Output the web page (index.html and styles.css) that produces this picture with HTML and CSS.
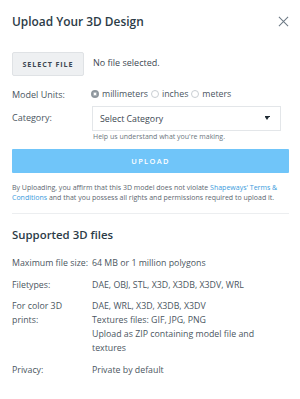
FILE: index.html
```html
<!DOCTYPE html>
<html>
<head>
<meta charset="utf-8">
<link rel="stylesheet" href="styles.css">
</head>
<body>
<div class="modal">
  <div class="header">
    <h1 class="title">Upload Your 3D Design</h1>
    <svg class="close" width="12" height="12" viewBox="0 0 12 12"><path d="M1 1L11 11M11 1L1 11" stroke="#6b7884" stroke-width="1.1" fill="none"/></svg>
  </div>
  <div class="file-row">
    <div class="btn-file">SELECT FILE</div>
    <span class="no-file">No file selected.</span>
  </div>
  <div class="units-row">
    <span class="label">Model Units:</span>
    <div class="radios">
      <span class="radio checked"></span><span class="opt">millimeters</span>
      <span class="radio"></span><span class="opt">inches</span>
      <span class="radio"></span><span class="opt">meters</span>
    </div>
  </div>
  <div class="cat-row">
    <span class="label cat-label">Category:</span>
    <div class="cat-field">
      <div class="select"><span>Select Category</span><span class="arrow"></span></div>
      <div class="help">Help us understand what you're making.</div>
    </div>
  </div>
  <div class="btn-upload">UPLOAD</div>
  <p class="disclaimer">By Uploading, you affirm that this 3D model does not violate <span class="link">Shapeways' Terms &amp;</span> <span class="link">Conditions</span> and that you possess all rights and permissions required to upload it.</p>
  <div class="divider"></div>
  <h2 class="sub">Supported 3D files</h2>
  <div class="specs">
    <div class="spec"><span class="k">Maximum file size:</span><span class="v">64 MB or 1 million polygons</span></div>
    <div class="spec"><span class="k">Filetypes:</span><span class="v">DAE, OBJ, STL, X3D, X3DB, X3DV, WRL</span></div>
    <div class="spec"><span class="k">For color 3D<br>prints:</span><span class="v">DAE, WRL, X3D, X3DB, X3DV<br>Textures files: GIF, JPG, PNG<br>Upload as ZIP containing model file and textures</span></div>
    <div class="spec"><span class="k">Privacy:</span><span class="v">Private by default</span></div>
  </div>
</div>
</body>
</html>
```
FILE: styles.css
```css
* { box-sizing: border-box; }
html, body { margin: 0; padding: 0; background: #fff; }
body { font-family: "Open Sans", "Noto Sans", sans-serif; color: #4b5661; }
.modal { width: 300px; padding: 11px 11px 0 12px; }
.header { display: flex; justify-content: space-between; align-items: center; height: 20px; }
.title { margin: 0; font-size: 11.9px; font-weight: 600; color: #2c3b47; line-height: 20px; }
.close { margin-right: 0; width: 11px; height: 11px; }
.file-row { display: flex; align-items: center; margin-top: 21px; }
.btn-file { width: 72px; height: 24px; background: #eef0f2; border: 1px solid #dfe2e5; border-radius: 2px; font-size: 7.2px; font-weight: 700; letter-spacing: 0.9px; color: #3d4852; display: flex; align-items: center; justify-content: center; }
.no-file { margin-left: 9px; font-size: 9px; color: #3d4852; margin-top: -3px; }
.units-row { display: flex; align-items: center; margin-top: 11px; height: 14px; }
.label { width: 79px; flex: none; font-size: 9px; color: #4b5661; }
.radios { display: flex; align-items: center; font-size: 8.8px; color: #4b5661; }
.radio { width: 8px; height: 8px; border-radius: 50%; border: 1px solid #c9ced3; background: #fff; margin-right: 3px; flex: none; }
.radio.checked { border: 2.4px solid #8e969d; background: #fff; box-shadow: inset 0 0 0 0.6px #8e969d; }
.opt { margin-right: 3px; }
.cat-row { display: flex; align-items: flex-start; margin-top: 5px; }
.cat-label { padding-top: 5px; }
.cat-field { width: 189px; margin-left: 1px; }
.select { height: 25px; border: 1px solid #e3e6e9; display: flex; align-items: center; justify-content: space-between; padding: 0 11px 0 7px; font-size: 8.8px; color: #3d4852; }
.arrow { width: 0; height: 0; border-left: 2.5px solid transparent; border-right: 2.5px solid transparent; border-top: 3.5px solid #1f2a33; position: relative; }
.arrow::before { content: ""; position: absolute; left: -2.5px; top: -4.5px; width: 5px; height: 1px; background: #1f2a33; }
.help { font-size: 7px; color: #6d7780; margin-top: 1px; padding-left: 1px; line-height: 9px; }
.btn-upload { margin-top: 8px; height: 24px; background: #70c5f9; color: #fff; font-size: 7.5px; font-weight: 600; letter-spacing: 1.3px; display: flex; align-items: center; justify-content: center; border-radius: 1px; }
.disclaimer { margin: 10px 0 0; font-size: 7px; line-height: 10px; color: #5d6770; }
.link { color: #3a9bdc; }
.divider { height: 1px; background: #eceef0; margin-top: 10px; }
.sub { margin: 13px 0 0; font-size: 11.4px; font-weight: 600; color: #2c3b47; line-height: 16px; }
.specs { margin-top: 13px; }
.spec { display: flex; font-size: 8.8px; line-height: 14px; color: #4b5661; margin-bottom: 7.5px; }
.k { width: 80px; flex: none; padding-right: 1px; }
.v { flex: 1; padding-right: 20px; }
```
